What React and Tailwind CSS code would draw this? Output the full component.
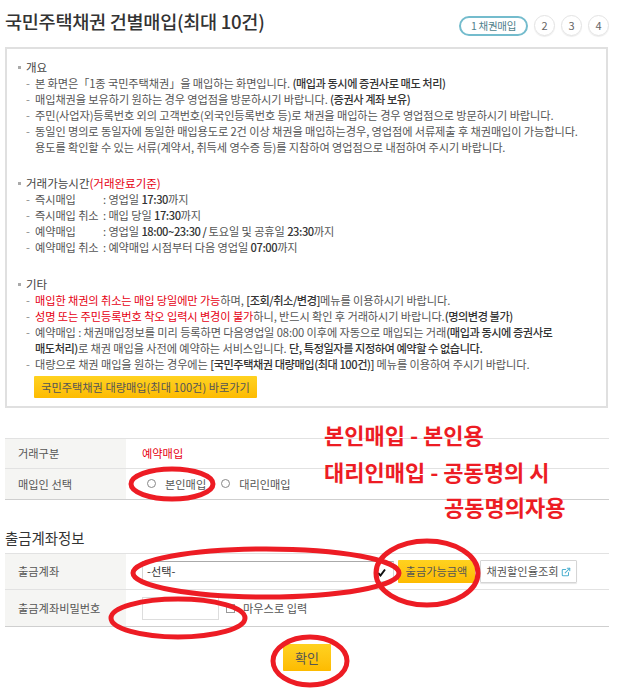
import { ExternalLink } from "lucide-react";

const FONT = "font-['Noto_Sans_CJK_KR','Noto_Sans',sans-serif]";
const BOLD = "font-medium tracking-[-0.45px] text-[#333]";

function Heading({ children }) {
  return (
    <div className="flex h-[16px] items-center text-[11.5px] leading-[16px] text-[#444]">
      <span className="mr-[5px] ml-[11px] h-[3px] w-[3px] bg-[#aaa]" />
      {children}
    </div>
  );
}

function Item({ children }) {
  return (
    <div className="flex pl-[19px] text-[11.2px] leading-[16px] tracking-[-0.1px] text-[#555]">
      <span className="w-[9px] shrink-0 text-[#888]">-</span>
      <div>{children}</div>
    </div>
  );
}

function TimeRow({ label, children }) {
  return (
    <Item>
      <span className="inline-block w-[68px]">{label}</span>: {children}
    </Item>
  );
}

function Row({ label, className, children }) {
  return (
    <div className={`flex border-t border-[#e2e2e2] ${className}`}>
      <div className="flex w-[121px] shrink-0 items-center bg-[#f5f5f3] pl-[13px] text-[11.2px] text-[#555]">
        {label}
      </div>
      <div className="flex flex-1 items-center pl-[16px] text-[11.2px] text-[#555]">
        {children}
      </div>
    </div>
  );
}

function Radio({ label, className }) {
  return (
    <label className={`flex items-center ${className}`}>
      <span className="h-[9px] w-[9px] rounded-full border border-[#888] bg-white" />
      <span className="ml-[9px]">{label}</span>
    </label>
  );
}

function Step({ n }) {
  return (
    <span className="flex h-[21px] w-[21px] items-center justify-center rounded-full border border-[#e3e3e3] text-[11px] text-[#666] shadow-[0_1px_1px_rgba(0,0,0,0.08)]">
      {n}
    </span>
  );
}

function Overlay() {
  return (
    <svg
      className="pointer-events-none absolute top-0 left-0"
      width="623"
      height="699"
      fill="none"
      stroke="#ed1c24"
      strokeWidth="5"
    >
      <ellipse cx="172" cy="484" rx="41" ry="15" />
      <ellipse cx="266" cy="573" rx="133" ry="24" />
      <ellipse cx="427" cy="573" rx="51" ry="32" />
      <ellipse cx="178" cy="618" rx="67" ry="19" />
      <ellipse cx="310" cy="661" rx="37" ry="24" />
    </svg>
  );
}

export default function App() {
  return (
    <div className={`relative h-[699px] w-[623px] overflow-hidden bg-white ${FONT}`}>
      <div className="ml-[5px] w-[604px]">
        <div className="flex h-[47px] items-center justify-between">
          <h1 className="pb-[5px] text-[18.6px] font-medium tracking-[-0.3px] text-[#333]">
            국민주택채권 건별매입(최대 10건)
          </h1>
          <div className="flex items-center gap-[6px] pt-[4px]">
            <span className="flex h-[20px] w-[69px] items-center justify-center rounded-full border-2 border-[#74bccd] text-[10.5px] tracking-[-0.3px] text-[#4f7f8c]">
              1 채권매입
            </span>
            <Step n="2" />
            <Step n="3" />
            <Step n="4" />
          </div>
        </div>

        <div className="h-[361px] w-[603px] border-2 border-[#e0e0e0] pt-[10px]">
          <Heading>개요</Heading>
          <Item>
            본 화면은「1종 국민주택채권」을 매입하는 화면입니다.{" "}
            <b className={BOLD}>(매입과 동시에 증권사로 매도 처리)</b>
          </Item>
          <Item>
            매입채권을 보유하기 원하는 경우 영업점을 방문하시기 바랍니다.{" "}
            <b className={BOLD}>(증권사 계좌 보유)</b>
          </Item>
          <Item>
            주민(사업자)등록번호 외의 고객번호(외국인등록번호 등)로 채권을 매입하는 경우 영업점으로 방문하시기 바랍니다.
          </Item>
          <Item>
            동일인 명의로 동일자에 동일한 매입용도로 2건 이상 채권을 매입하는경우, 영업점에 서류제출 후 채권매입이 가능합니다.
            <br />
            용도를 확인할 수 있는 서류(계약서, 취득세 영수증 등)를 지참하여 영업점으로 내점하여 주시기 바랍니다.
          </Item>

          <div className="mt-[20px]">
            <Heading>
              거래가능시간<span className="text-[#e60012]">(거래완료기준)</span>
            </Heading>
            <TimeRow label="즉시매입">
              영업일 <b className={BOLD}>17:30</b>까지
            </TimeRow>
            <TimeRow label="즉시매입 취소">
              매입 당일 <b className={BOLD}>17:30</b>까지
            </TimeRow>
            <TimeRow label="예약매입">
              영업일 <b className={BOLD}>18:00~23:30 / </b>토요일 및 공휴일{" "}
              <b className={BOLD}>23:30</b>까지
            </TimeRow>
            <TimeRow label="예약매입 취소">
              예약매입 시점부터 다음 영업일 <b className={BOLD}>07:00</b>까지
            </TimeRow>
          </div>

          <div className="mt-[21px]">
            <Heading>기타</Heading>
            <Item>
              <span className="text-[#e60012]">매입한 채권의 취소는 매입 당일에만 가능</span>하며,{" "}
              <b className={BOLD}>[조회/취소/변경]</b>메뉴를 이용하시기 바랍니다.
            </Item>
            <Item>
              <span className="text-[#e60012]">성명 또는 주민등록번호 착오 입력시 변경이 불가</span>
              하니, 반드시 확인 후 거래하시기 바랍니다.<b className={BOLD}>(명의변경 불가)</b>
            </Item>
            <Item>
              예약매입 : 채권매입정보를 미리 등록하면 다음영업일 08:00 이후에 자동으로 매입되는 거래
              <b className={BOLD}>(매입과 동시에 증권사로</b>
              <br />
              <b className={BOLD}>매도처리)</b>로 채권 매입을 사전에 예약하는 서비스입니다.{" "}
              <b className={BOLD}>단, 특정일자를 지정하여 예약할 수 없습니다.</b>
            </Item>
            <Item>
              대량으로 채권 매입을 원하는 경우에는{" "}
              <b className={BOLD}>[국민주택채권 대량매입(최대 100건)]</b> 메뉴를 이용하여 주시기 바랍니다.
            </Item>
            <button className="mt-[4px] ml-[27px] flex h-[22px] w-[223px] items-center justify-center rounded-[1px] bg-gradient-to-b from-[#ffd21f] to-[#fdbb00] text-[11.2px] text-[#555]">
              국민주택채권 대량매입(최대 100건) 바로가기
            </button>
          </div>
        </div>

        <div className="mt-[30px] border-b border-[#cfcfcf]">
          <Row label="거래구분" className="h-[30px]">
            <span className="text-[#e60012]">예약매입</span>
          </Row>
          <Row label="매입인 선택" className="h-[31px]">
            <Radio label="본인매입" className="ml-[5px]" />
            <Radio label="대리인매입" className="ml-[15px]" />
          </Row>
        </div>

        <h2 className="mt-[29px] h-[23px] text-[14.4px] leading-[18px] text-[#333]">출금계좌정보</h2>

        <div className="mt-[1px] border-b border-[#cfcfcf]">
          <Row label="출금계좌" className="h-[36px]">
            <div className="relative flex h-[21px] w-[252px] items-center border border-[#d5d5d5] border-t-[#aaa] pl-[4px] text-[11.2px] text-[#333]">
              -선택-
              <svg className="absolute top-[6px] right-[7px]" width="9" height="9" viewBox="0 0 9 9" fill="none">
                <path d="M1 5 L3.5 7.5 L8 1.5" stroke="#111" strokeWidth="2" />
              </svg>
            </div>
            <button className="ml-[4px] h-[23px] w-[77px] rounded-[1px] bg-gradient-to-b from-[#ffd21f] to-[#fdbb00] text-[11.2px] text-[#555]">
              출금가능금액
            </button>
            <button className="ml-[5px] flex h-[23px] w-[97px] items-center justify-center gap-[2px] rounded-[1px] border border-[#d5d5d5] text-[11.2px] text-[#555] shadow-[0_1px_1px_rgba(0,0,0,0.1)]">
              채권할인율조회
              <ExternalLink size={10} color="#4db0d0" strokeWidth={2.5} />
            </button>
          </Row>
          <Row label="출금계좌비밀번호" className="h-[37px]">
            <div className="h-[23px] w-[77px] border border-[#ddd]" />
            <span className="ml-[7px] h-[9px] w-[9px] border border-[#999]" />
            <span className="ml-[8px]">마우스로 입력</span>
          </Row>
        </div>

        <button className="mx-auto mt-[17px] block h-[27px] w-[48px] rounded-[1px] bg-gradient-to-b from-[#ffd21f] to-[#fdbb00] text-[13px] text-[#555]">
          확인
        </button>
      </div>

      <Overlay />

      <div className="absolute top-[420px] left-[324px] text-[22px] leading-[28px] font-bold text-[#ed1c24]">
        본인매입 - 본인용
      </div>
      <div className="absolute top-[457px] left-[324px] text-[22px] leading-[28px] font-bold text-[#ed1c24]">
        대리인매입 - 공동명의 시
      </div>
      <div className="absolute top-[492px] left-[444px] text-[22px] leading-[28px] font-bold text-[#ed1c24]">
        공동명의자용
      </div>
    </div>
  );
}
